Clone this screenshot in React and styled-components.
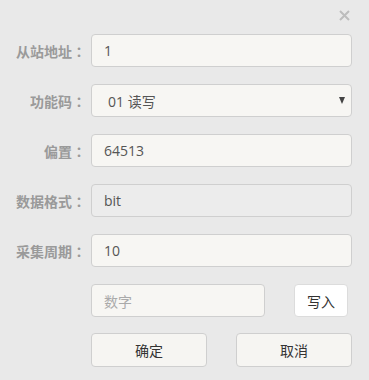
import React from "react";
import styled, { createGlobalStyle } from "styled-components";

const Global = createGlobalStyle`
  html, body { margin: 0; padding: 0; background: #e9e9e9; }
  body { font-family: "Open Sans", "Noto Sans CJK SC", sans-serif; }
  * { box-sizing: border-box; }
`;

const Dialog = styled.div`
  position: relative;
  width: 369px;
  height: 380px;
  background: #e9e9e9;
  padding: 34px 0 0 0;
  display: flex;
  flex-direction: column;
  gap: 17px;
`;

const Close = styled.button`
  position: absolute;
  top: 9px;
  right: 19px;
  width: 12px;
  height: 12px;
  padding: 0;
  border: 0;
  background: transparent;
  display: flex;
  align-items: center;
  justify-content: center;
  cursor: pointer;
`;

const Row = styled.div`
  display: grid;
  grid-template-columns: 86px 261px;
  column-gap: 5px;
  align-items: center;
  height: 33px;
`;

const Label = styled.label`
  text-align: right;
  font-family: "Noto Sans CJK SC", sans-serif;
  font-size: 14px;
  font-weight: 700;
  color: #9a9a9a;
  white-space: nowrap;
`;

const Colon = styled.span`
  font-family: "Noto Sans CJK JP", sans-serif;
`;

const Field = styled.div`
  height: 33px;
  border: 1px solid #cfcfcf;
  border-radius: 4px;
  background: ${(p) => (p.$disabled ? "#ececec" : "#f7f6f3")};
  display: flex;
  align-items: center;
  padding-left: ${(p) => p.$pad || 12}px;
  font-size: 14px;
  color: #555;
  position: relative;
`;

const Value = styled.span`
  font-family: "Open Sans", "Noto Sans CJK SC", sans-serif;
  font-size: 14px;
  color: ${(p) => (p.$placeholder ? "#aaa" : "#555")};
`;

const Caret = styled.span`
  position: absolute;
  right: 6px;
  top: 12px;
  width: 0;
  height: 0;
  border-left: 3.5px solid transparent;
  border-right: 3.5px solid transparent;
  border-top: 7px solid #444;
`;

const WriteRow = styled.div`
  display: flex;
  align-items: center;
  height: 33px;
  padding-left: 91px;
`;

const SmallField = styled(Field)`
  width: 174px;
`;

const Btn = styled.button`
  height: ${(p) => p.$h || 34}px;
  width: ${(p) => p.$w}px;
  margin-left: ${(p) => p.$ml || 0}px;
  border: 1px solid ${(p) => (p.$white ? "#dcdcdc" : "#cfcfcf")};
  border-radius: 4px;
  background: ${(p) => (p.$white ? "#ffffff" : "#f6f5f2")};
  font-family: "Noto Sans CJK SC", sans-serif;
  font-size: 14px;
  color: #333;
  padding: 0;
  cursor: pointer;
`;

const ButtonRow = styled.div`
  display: flex;
  align-items: center;
  padding-left: 91px;
  margin-top: -1px;
`;

const fields = [
  { label: "从站地址", value: "1" },
  { label: "功能码", value: "01 读写", select: true },
  { label: "偏置", value: "64513" },
  { label: "数据格式", value: "bit", disabled: true },
  { label: "采集周期", value: "10" },
];

export default function App() {
  return (
    <>
      <Global />
      <Dialog>
        <Close aria-label="close">
          <svg width="11" height="11" viewBox="0 0 11 11">
            <path d="M1 1 L10 10 M10 1 L1 10" stroke="#bdbdbd" strokeWidth="2" />
          </svg>
        </Close>
        {fields.map((f) => (
          <Row key={f.label}>
            <Label>
              {f.label}
              <Colon>：</Colon>
            </Label>
            <Field $disabled={f.disabled} $pad={f.select ? 16 : 12}>
              <Value>{f.value}</Value>
              {f.select && <Caret />}
            </Field>
          </Row>
        ))}
        <WriteRow>
          <SmallField><Value $placeholder>数字</Value></SmallField>
          <Btn $white $w={54} $h={33} $ml={29}>写入</Btn>
        </WriteRow>
        <ButtonRow>
          <Btn $w={116}>确定</Btn>
          <Btn $w={116} $ml={29}>取消</Btn>
        </ButtonRow>
      </Dialog>
    </>
  );
}
